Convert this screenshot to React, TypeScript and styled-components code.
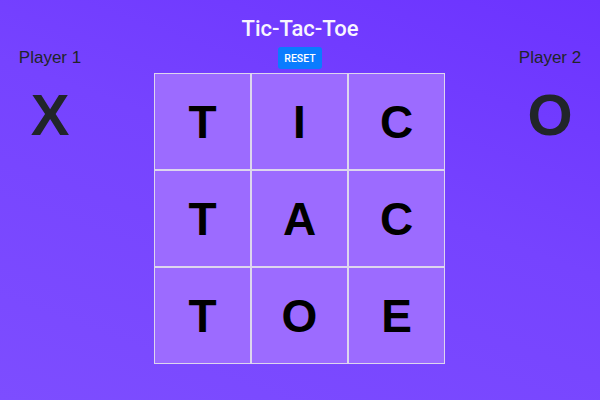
import React from "react";
import styled, { createGlobalStyle } from "styled-components";

const Global = createGlobalStyle`
  html, body { margin: 0; padding: 0; }
  body { font-family: Roboto, "Liberation Sans", Arial, sans-serif; }
`;

const Page = styled.div`
  width: 600px;
  height: 400px;
  box-sizing: border-box;
  background: linear-gradient(200deg, #6c33ff 0%, #7643ff 45%, #7d4dff 100%);
  display: flex;
  flex-direction: column;
  align-items: center;
  padding-top: 14px;
  overflow: hidden;
`;

const Title = styled.h1`
  margin: 0;
  font-size: 22px;
  line-height: 30px;
  font-weight: 500;
  color: #f8f5ff;
`;

const Main = styled.div`
  width: 100%;
  display: flex;
  justify-content: space-between;
  align-items: flex-start;
  margin-top: 3px;
`;

const Side = styled.div`
  width: 100px;
  display: flex;
  flex-direction: column;
  align-items: center;
`;

const PlayerLabel = styled.div`
  font-family: "Liberation Sans", Arial, sans-serif;
  font-size: 17px;
  line-height: 22px;
  font-weight: 400;
  color: #212529;
`;

const Symbol = styled.div`
  margin-top: 16px;
  font-family: "Liberation Sans", Arial, sans-serif;
  font-size: 58px;
  line-height: 60px;
  font-weight: 700;
  color: #212529;
`;

const Center = styled.div`
  display: flex;
  flex-direction: column;
  align-items: center;
  gap: 4px;
`;

const ResetButton = styled.button`
  height: 22px;
  width: 44px;
  padding: 0;
  border: none;
  border-radius: 3px;
  background: #0a7cff;
  color: #fff;
  font-family: Roboto, "Liberation Sans", Arial, sans-serif;
  font-size: 10.5px;
  font-weight: 500;
  cursor: pointer;
`;

const Board = styled.div`
  display: grid;
  grid-template-columns: repeat(3, 97px);
  grid-template-rows: repeat(3, 97px);
  margin-left: -1px;
`;

const Cell = styled.div`
  box-sizing: border-box;
  border: 1px solid #ddd6ee;
  background: #9c6bff;
  display: flex;
  align-items: center;
  justify-content: center;
  font-family: "Liberation Sans", Arial, sans-serif;
  font-size: 46px;
  font-weight: 700;
  color: #000;
`;

const letters = ["T", "I", "C", "T", "A", "C", "T", "O", "E"];

export default function App() {
  return (
    <>
      <Global />
      <Page>
        <Title>Tic-Tac-Toe</Title>
        <Main>
          <Side>
            <PlayerLabel>Player 1</PlayerLabel>
            <Symbol>X</Symbol>
          </Side>
          <Center>
            <ResetButton>RESET</ResetButton>
            <Board>
              {letters.map((l, i) => (
                <Cell key={i}>{l}</Cell>
              ))}
            </Board>
          </Center>
          <Side>
            <PlayerLabel>Player 2</PlayerLabel>
            <Symbol>O</Symbol>
          </Side>
        </Main>
      </Page>
    </>
  );
}
